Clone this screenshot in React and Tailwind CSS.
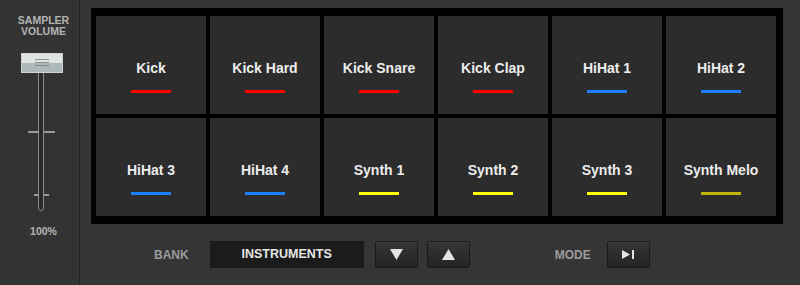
const PADS = [
  { name: 'Kick', color: 'bg-[#ff0000]' },
  { name: 'Kick Hard', color: 'bg-[#ff0000]' },
  { name: 'Kick Snare', color: 'bg-[#ff0000]' },
  { name: 'Kick Clap', color: 'bg-[#ff0000]' },
  { name: 'HiHat 1', color: 'bg-[#1a80ff]' },
  { name: 'HiHat 2', color: 'bg-[#1a80ff]' },
  { name: 'HiHat 3', color: 'bg-[#1a80ff]' },
  { name: 'HiHat 4', color: 'bg-[#1a80ff]' },
  { name: 'Synth 1', color: 'bg-[#ffff00]' },
  { name: 'Synth 2', color: 'bg-[#ffff00]' },
  { name: 'Synth 3', color: 'bg-[#ffff00]' },
  { name: 'Synth Melo', color: 'bg-[#bdb500]' },
]

function Pad({ name, color }) {
  return (
    <div className="bg-[#2c2c2c] flex flex-col items-center pt-[44px]">
      <span className="text-[14px] leading-[16px] font-bold text-[#ececec]">{name}</span>
      <div className={`w-[40px] h-[3px] mt-[14px] ${color}`} />
    </div>
  )
}

function SmallButton({ children, className = '' }) {
  return (
    <button className={`w-[43px] h-[27px] flex items-center justify-center rounded-[2px] border border-[#1a1a1a] bg-gradient-to-b from-[#363636] to-[#242424] shadow-[inset_0_1px_0_rgba(255,255,255,0.06)] ${className}`}>
      {children}
    </button>
  )
}

function Fader() {
  return (
    <div className="relative w-[48px] h-[158px] mt-[16px]">
      {/* track */}
      <div className="absolute left-[18px] top-[18px] w-[6px] h-[140px] rounded-b-[3px] border border-[#8a8a8a] bg-[#2a2a2a]" />
      {/* ticks */}
      <div className="absolute left-[8px] top-[78px] w-[11px] h-[2px] bg-[#9a9a9a]" />
      <div className="absolute left-[24px] top-[78px] w-[11px] h-[2px] bg-[#9a9a9a]" />
      <div className="absolute left-[14px] top-[141px] w-[5px] h-[2px] bg-[#9a9a9a]" />
      <div className="absolute left-[24px] top-[141px] w-[5px] h-[2px] bg-[#9a9a9a]" />
      {/* knob */}
      <div className="absolute left-[1px] top-0 w-[42px] h-[20px] border border-[#d0d4d4] overflow-hidden">
        <div className="h-[9px] bg-[#e2e4e4]" />
        <div className="h-[9px] bg-[#adb8b8]" />
        <div className="absolute left-[13px] top-[5px] w-[14px] flex flex-col gap-[2px]">
          <div className="h-px bg-[#8c9494]" />
          <div className="h-px bg-[#8c9494]" />
          <div className="h-px bg-[#7d8787]" />
        </div>
      </div>
    </div>
  )
}

export default function App() {
  return (
    <div className="w-[800px] h-[285px] flex bg-[#353535] overflow-hidden" style={{ fontFamily: '"Liberation Sans", Arial, sans-serif' }}>
      {/* left volume column */}
      <div className="w-[80px] h-full border-r border-[#242424] bg-[#333333] flex flex-col items-center pl-[8px] pt-[15px]">
        <div className="text-[10.5px] leading-[11px] font-bold text-[#b4b4b4] text-center">
          SAMPLER<br />VOLUME
        </div>
        <Fader />
        <div className="mt-[14px] text-[10.5px] leading-[12px] font-bold text-[#b4b4b4]">100%</div>
      </div>

      {/* main */}
      <div className="flex-1 pl-[11px] pt-[8px]">
        <div className="w-[692px] h-[216px] bg-black pl-[5px] pr-[7px] py-[8px] grid grid-cols-6 grid-rows-2 gap-[4px]">
          {PADS.map((p) => (
            <Pad key={p.name} {...p} />
          ))}
        </div>

        <div className="flex items-center mt-[17px] h-[27px]">
          <span className="ml-[63px] text-[12px] font-bold text-[#9c9c9c]">BANK</span>
          <div className="ml-[21px] w-[154px] h-[27px] bg-[#1b1b1b] flex items-center justify-center text-[12.5px] font-bold text-[#e6e6e6]">
            INSTRUMENTS
          </div>
          <SmallButton className="ml-[11px]">
            <svg width="13" height="11" viewBox="0 0 13 11">
              <path d="M0 0 H13 L6.5 11 Z" fill="#e4e4e4" />
            </svg>
          </SmallButton>
          <SmallButton className="ml-[9px]">
            <svg width="13" height="11" viewBox="0 0 13 11">
              <path d="M0 11 H13 L6.5 0 Z" fill="#e4e4e4" />
            </svg>
          </SmallButton>
          <span className="ml-[85px] text-[12px] font-bold text-[#9c9c9c]">MODE</span>
          <SmallButton className="ml-[16px]">
            <svg width="13" height="9" viewBox="0 0 13 9">
              <path d="M0 0 L8 4.5 L0 9 Z" fill="#e4e4e4" />
              <rect x="10" y="0" width="2" height="9" fill="#e4e4e4" />
            </svg>
          </SmallButton>
        </div>
      </div>
    </div>
  )
}
